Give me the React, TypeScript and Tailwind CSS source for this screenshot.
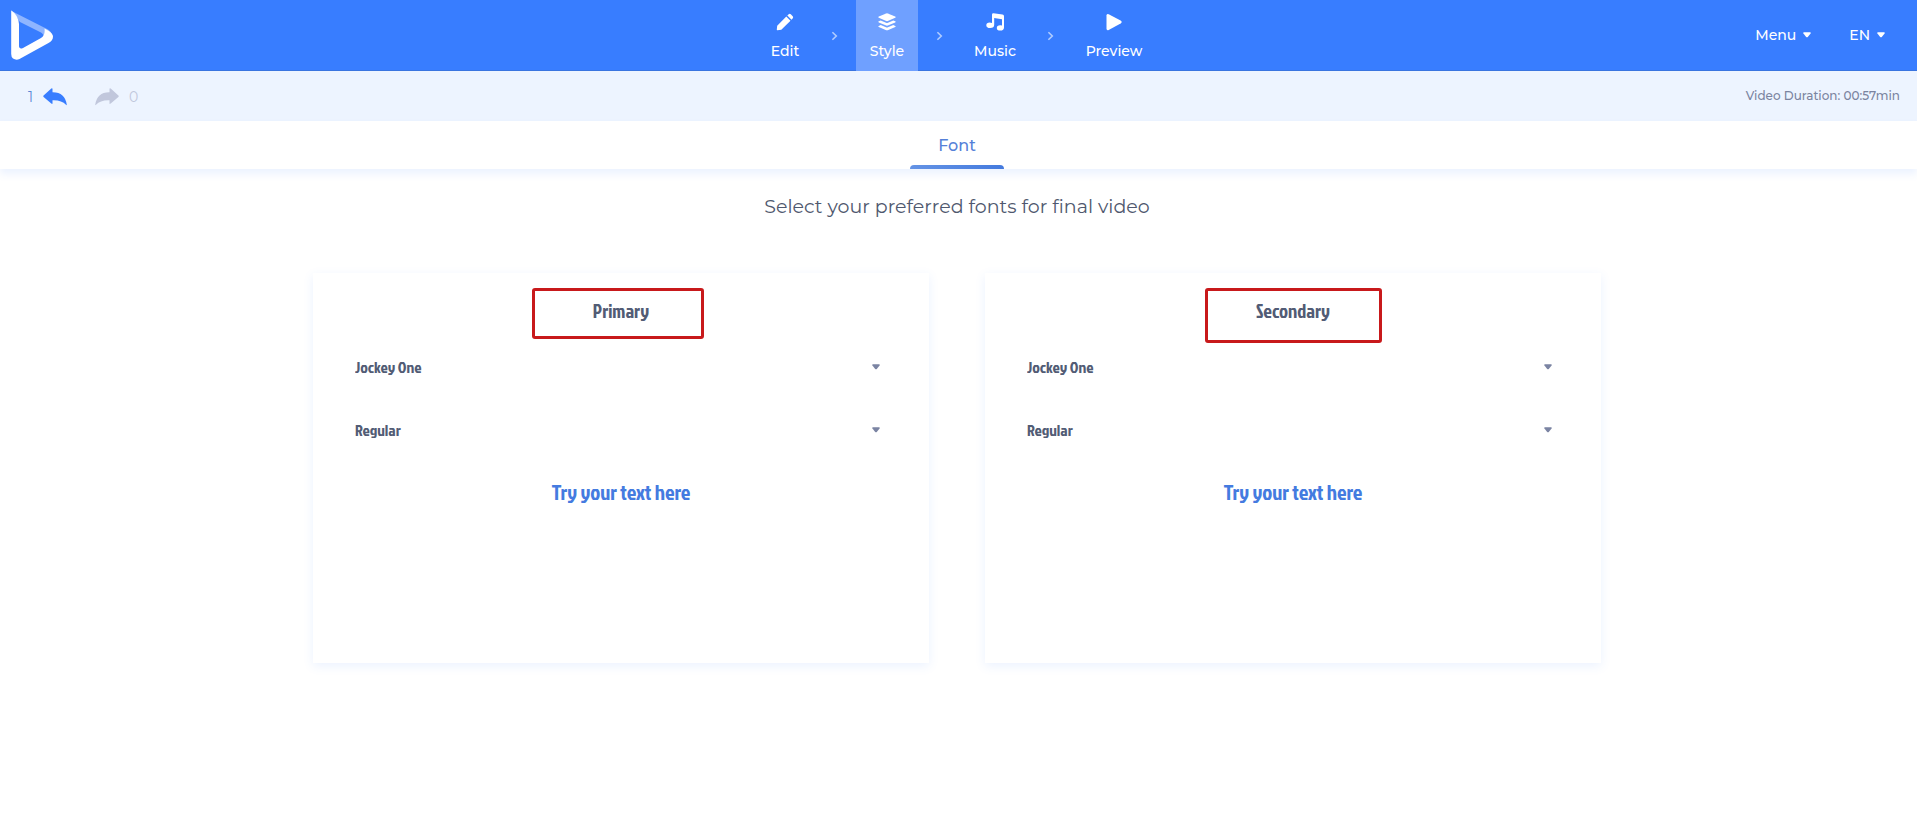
import { Fragment, useState, type ReactNode } from "react";

const MONT = "font-['Montserrat','Inter',sans-serif]";
const JOCKEY = "font-['Jockey_One','Liberation_Sans_Narrow','Roboto_Condensed','Roboto',sans-serif]";

function Logo() {
  return (
    <svg viewBox="0 0 44 50" className="h-[50px] w-11" aria-hidden="true">
      <path d="M2.500 1.500 L38 19.500 Q43 23 42 28 L34.500 29 Q34.500 25 31 22.500 L10 12 Z" fill="#8fb5ff" />
      <path
        d="M1.500 0.500 Q8.500 5.500 9 14 V36.500 Q9.500 39.500 13 38 L31 28 Q35.500 25 34.500 18.500 L38.500 20.800 Q43 24 43 26.500 Q43 30.500 38.500 33 L9.500 49 Q6 50.500 3 48.500 Q1.200 47 1.200 44 V1 Q1.200 0.500 1.500 0.500Z"
        fill="#fff"
      />
    </svg>
  );
}

function Pencil() {
  return (
    <svg viewBox="0 0 18 18" className="size-[18px]" fill="currentColor" aria-hidden="true">
      <path d="M1.200 12.700 10.300 3.500 14.500 7.700 5.300 16.800 1.400 17.200Q.7 17.300.8 16.600ZM11.300 2.500 12.700 1.200Q13.700.4 14.800 1.300L16.700 3.200Q17.600 4.200 16.800 5.300L15.500 6.700Z" />
    </svg>
  );
}

function Layers() {
  return (
    <svg viewBox="0 0 18 18" className="size-[18px]" fill="currentColor" aria-hidden="true">
      <path d="M8.200.5Q9 .2 9.800.5L17.200 3.600Q18.200 4.200 17.200 4.800L9.800 8Q9 8.300 8.200 8L.8 4.800Q-.2 4.200.8 3.600Z" />
      <path d="M.8 8.200 2.700 7.400 8 9.700Q9 10.100 10 9.700L15.300 7.400 17.200 8.200Q18.200 8.800 17.200 9.400L9.800 12.500Q9 12.800 8.200 12.500L.8 9.400Q-.2 8.800.8 8.200Z" />
      <path d="M.8 12.900 2.700 12.100 8 14.300Q9 14.700 10 14.300L15.300 12.100 17.200 12.900Q18.200 13.500 17.200 14.100L9.800 17.200Q9 17.500 8.200 17.200L.8 14.100Q-.2 13.500.8 12.900Z" />
    </svg>
  );
}

function Notes() {
  return (
    <svg viewBox="0 0 18 18" className="size-[18px]" fill="currentColor" aria-hidden="true">
      <path d="M6 1.700Q6 .2 7.500.3L16.500 1.500Q18 1.700 18 3.200V14.500Q18 17.600 14.300 17.600 10.800 17.600 10.800 15 10.800 12.300 14.200 12.300 15.400 12.300 16 12.500V6.200L8.200 5.100V11.800Q8.200 15 4.200 15 .3 15 .3 12.200.3 9.600 3.800 9.600 5.300 9.600 6 9.900Z" />
    </svg>
  );
}

function Play() {
  return (
    <svg viewBox="0 0 18 18" className="size-[18px]" fill="currentColor" aria-hidden="true">
      <path d="M1.500 2.600Q1.500.3 3.700 1.200L15.600 7.500Q17.800 9 15.600 10.400L3.700 16.900Q1.500 17.800 1.500 15.400Z" />
    </svg>
  );
}

function CurvedArrow({ flip = false }: { flip?: boolean }) {
  return (
    <svg viewBox="0 0 24 18" className="h-[18px] w-6" fill="currentColor" aria-hidden="true">
      <g transform={flip ? "translate(24 0) scale(-1 1)" : undefined}>
        <path d="M.6 7.600 8.300.6Q9.500-.2 9.500 1.200V4.200Q22 4 23.800 16.800 23.800 17.600 23 16.700 18.500 11.800 9.500 12.200V15.200Q9.500 16.600 8.300 15.600L.6 9Q-.1 8.300.6 7.600Z" />
      </g>
    </svg>
  );
}

function Caret({ className }: { className: string }) {
  return (
    <svg viewBox="0 0 8 6" className={className} fill="currentColor" aria-hidden="true">
      <path d="M1 .3H7Q8.200.5 7.600 1.600L4.800 4.900Q4 5.700 3.200 4.900L.4 1.600Q-.2.5 1 .3Z" />
    </svg>
  );
}

function Chevron() {
  return (
    <svg viewBox="0 0 7 10" className="mx-[18px] h-[10px] w-[7px]" fill="none" stroke="#b0ccff" strokeWidth="1.600" aria-hidden="true">
      <path d="M1.400 1.200 5.300 5 1.400 8.800" />
    </svg>
  );
}

const steps: { label: string; icon: ReactNode; width: string; active?: boolean }[] = [
  { label: "Edit", icon: <Pencil />, width: "w-14" },
  { label: "Style", icon: <Layers />, width: "w-[62px]", active: true },
  { label: "Music", icon: <Notes />, width: "w-[68px]" },
  { label: "Preview", icon: <Play />, width: "w-[84px]" },
];

function Picker({ label, value }: { label: string; value: string }) {
  return (
    <div className="relative flex h-[63px] items-center text-[#7b84a3]">
      <select
        aria-label={label}
        className="h-8 w-full cursor-pointer appearance-none bg-transparent text-base text-[#525c75]"
      >
        <option>{value}</option>
      </select>
      <Caret className="pointer-events-none absolute top-[29px] right-[7px] h-[6px] w-2" />
    </div>
  );
}

function FontCard({ title, outline }: { title: string; outline: string }) {
  const [sample, setSample] = useState("Try your text here");
  return (
    <section className={`relative flex flex-1 flex-col px-[42px] pt-6 pb-4 shadow-[0_3px_10px_rgba(56,125,255,0.1)] ${JOCKEY}`}>
      <h2 className="text-center text-[19px] leading-7 text-[#525c75]">{title}</h2>
      <div className={`pointer-events-none absolute top-[15px] rounded-[3px] border-[3px] border-[#c8191b] ${outline}`} />
      <div className="mt-[10px]">
        <Picker label={`${title} font`} value="Jockey One" />
        <Picker label={`${title} style`} value="Regular" />
      </div>
      <textarea
        aria-label={`${title} sample text`}
        value={sample}
        onChange={(e) => setSample(e.target.value)}
        className="mt-[17px] h-[169px] resize-none bg-transparent text-center text-[21px] leading-7 text-[#447be0] outline-none"
      />
    </section>
  );
}

export default function App() {
  return (
    <div className={`min-h-screen bg-white ${MONT}`}>
      <header className="grid h-[71px] grid-cols-[1fr_auto_1fr] bg-[#387dff] text-white shadow-[inset_0_-1px_#3974e0]">
        <a href="#home" aria-label="Home" className="flex w-16 items-center pb-[2px] pl-[10px]">
          <Logo />
        </a>
        <nav className="flex items-center pr-1 text-sm font-medium">
          {steps.map((step, i) => (
            <Fragment key={step.label}>
              {i > 0 && <Chevron />}
              <button
                type="button"
                className={`flex h-full flex-col items-center gap-[10px] pt-[13px] leading-5 ${step.width} ${step.active ? "bg-[#6fa0ff]" : ""}`}
              >
                {step.icon}
                {step.label}
              </button>
            </Fragment>
          ))}
        </nav>
        <div className="flex items-center justify-end gap-[38px] pr-8 pb-[2px] text-sm font-medium">
          <button type="button" className="flex items-center gap-[7px]">
            Menu <Caret className="h-[6px] w-2" />
          </button>
          <button type="button" className="flex items-center gap-[7px]">
            EN <Caret className="h-[6px] w-2" />
          </button>
        </div>
      </header>

      <div className="flex h-[50px] items-center justify-between bg-[#edf4ff] pr-[17px] pl-7">
        <div className="flex items-center gap-7 pt-[2px] text-sm">
          <button type="button" aria-label="Undo" className="flex items-center gap-[10px] text-[#387dff]">
            <span className="text-[#5c86d6]">1</span>
            <CurvedArrow />
          </button>
          <button type="button" aria-label="Redo" className="flex items-center gap-[10px] text-[#c1c7dc]">
            <CurvedArrow flip />
            <span>0</span>
          </button>
        </div>
        <p className="text-xs font-medium text-[#7b84a0]">Video Duration: 00:57min</p>
      </div>

      <div className="flex h-12 justify-center pr-[3px] shadow-[0_5px_8px_rgba(56,125,255,0.1)]">
        <button type="button" className="flex w-[94px] flex-col text-base font-medium text-[#5580d8]">
          <span className="flex w-full flex-1 items-center justify-center pt-[6px]">Font</span>
          <span className="h-1 w-full rounded-t-[4px] bg-linear-to-r from-[#6493e5] to-[#447ade]" />
        </button>
      </div>

      <main className="flex flex-col items-center pr-[3px]">
        <h1 className="mt-6 text-[19px] leading-7 text-[#4f586e]">Select your preferred fonts for final video</h1>
        <div className="mt-[52px] flex w-full max-w-[1288px] gap-14">
          <FontCard title="Primary" outline="left-[219px] h-[51px] w-[172px]" />
          <FontCard title="Secondary" outline="left-[220px] h-[55px] w-[177px]" />
        </div>
      </main>
    </div>
  );
}
